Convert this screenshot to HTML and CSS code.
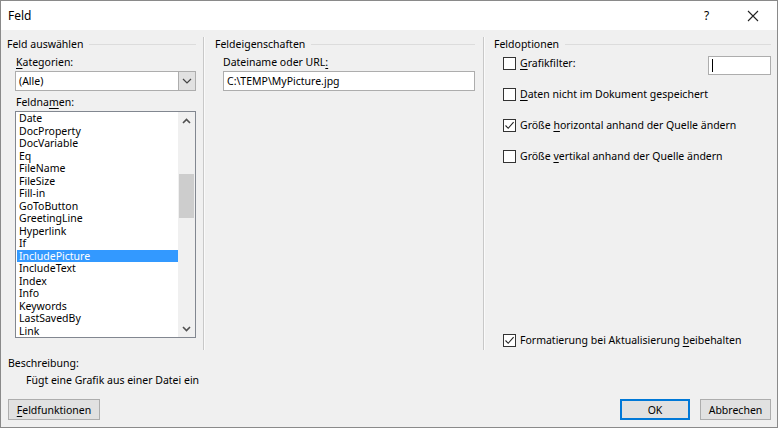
FILE: index.html
```html
<!DOCTYPE html>
<html lang="de">
<head>
<meta charset="utf-8">
<title>Feld</title>
<link rel="stylesheet" href="styles.css">
</head>
<body>
<div class="dialog">
  <div class="titlebar">
    <span class="title">Feld</span>
    <span class="help">?</span>
    <span class="close"><svg width="12" height="12" viewBox="0 0 12 12"><path d="M1 1L11 11M11 1L1 11" stroke="#222" stroke-width="1.1" fill="none"/></svg></span>
  </div>
  <div class="body">
    <div class="columns">
      <div class="col col-left">
        <div class="group-head"><span>Feld auswählen</span></div>
        <div class="label"><u>K</u>ategorien:</div>
        <div class="combo">
          <span class="combo-text">(Alle)</span>
          <span class="combo-btn"><svg width="10" height="6" viewBox="0 0 10 6"><path d="M1 1L5 5L9 1" stroke="#444" stroke-width="1.2" fill="none"/></svg></span>
        </div>
        <div class="label">Feldna<u>m</u>en:</div>
        <div class="listbox">
          <ul class="items">
            <li>Date</li>
            <li>DocProperty</li>
            <li>DocVariable</li>
            <li>Eq</li>
            <li>FileName</li>
            <li>FileSize</li>
            <li>Fill-in</li>
            <li>GoToButton</li>
            <li>GreetingLine</li>
            <li>Hyperlink</li>
            <li>If</li>
            <li class="sel">IncludePicture</li>
            <li>IncludeText</li>
            <li>Index</li>
            <li>Info</li>
            <li>Keywords</li>
            <li>LastSavedBy</li>
            <li>Link</li>
          </ul>
          <div class="scrollbar">
            <span class="arrow"><svg width="9" height="6" viewBox="0 0 9 6"><path d="M1 5L4.5 1.5L8 5" stroke="#505050" stroke-width="1.6" fill="none"/></svg></span>
            <div class="track"><div class="thumb"></div></div>
            <span class="arrow"><svg width="9" height="6" viewBox="0 0 9 6"><path d="M1 1L4.5 4.5L8 1" stroke="#505050" stroke-width="1.6" fill="none"/></svg></span>
          </div>
        </div>
      </div>
      <div class="col col-mid">
        <div class="group-head"><span>Feldeigenschaften</span></div>
        <div class="label">Dateiname oder URL<u>:</u></div>
        <div class="textbox">C:\TEMP\MyPicture.jpg</div>
      </div>
      <div class="col col-right">
        <div class="group-head"><span>Feldoptionen</span></div>
        <div class="opt opt-first">
          <span class="cb"></span><span class="opt-text"><u>G</u>rafikfilter:</span>
          <span class="filter-box"><span class="caret"></span></span>
        </div>
        <div class="opt"><span class="cb"></span><span class="opt-text"><u>D</u>aten nicht im Dokument gespeichert</span></div>
        <div class="opt"><span class="cb checked"><svg width="11" height="11" viewBox="0 0 11 11"><path d="M1.5 5.5L4.2 8.3L9.6 2.2" stroke="#222" stroke-width="1.1" fill="none"/></svg></span><span class="opt-text">Größe <u>h</u>orizontal anhand der Quelle ändern</span></div>
        <div class="opt"><span class="cb"></span><span class="opt-text">Größe <u>v</u>ertikal anhand der Quelle ändern</span></div>
        <div class="opt opt-last"><span class="cb checked"><svg width="11" height="11" viewBox="0 0 11 11"><path d="M1.5 5.5L4.2 8.3L9.6 2.2" stroke="#222" stroke-width="1.1" fill="none"/></svg></span><span class="opt-text">Formatierung bei Aktualisierung <u>b</u>eibehalten</span></div>
      </div>
    </div>
    <div class="desc">
      <div class="desc-label">Beschreibung:</div>
      <div class="desc-text">Fügt eine Grafik aus einer Datei ein</div>
    </div>
    <div class="buttons">
      <button class="btn btn-func"><u>F</u>eldfunktionen</button>
      <span class="spacer"></span>
      <button class="btn btn-ok">OK</button>
      <button class="btn btn-cancel">Abbrechen</button>
    </div>
  </div>
</div>
</body>
</html>
```

FILE: styles.css
```css
* { box-sizing: border-box; }
html, body { margin: 0; padding: 0; }
body {
  font-family: "Noto Sans", "Open Sans", sans-serif;
  font-size: 10.5px;
  color: #000;
  background: #f0f0f0;
}
u { text-decoration: underline; text-underline-offset: 2px; }

.dialog {
  width: 778px;
  height: 428px;
  border: 1px solid #8a8a8a;
  background: #f0f0f0;
  display: flex;
  flex-direction: column;
}
.titlebar {
  height: 29px;
  background: #fff;
  display: flex;
  align-items: center;
  padding-left: 7px;
}
.title { font-size: 12px; flex: 1; }
.help { width: 20px; font-size: 12px; margin-right: 23px; }
.close { width: 12px; margin-right: 18px; display: flex; }

.body {
  flex: 1;
  display: flex;
  flex-direction: column;
  padding: 7px 6px 7px 6px;
}
.columns {
  display: flex;
  height: 313px;
}
.col { display: flex; flex-direction: column; }
.col-left { width: 196px; padding-right: 7px; }
.col-mid {
  width: 280px;
  border-left: 1px solid #c8c8c8;
  box-shadow: inset 1px 0 0 #fafafa;
  padding-left: 11px;
  padding-right: 8px;
}
.col-right {
  flex: 1;
  border-left: 1px solid #c8c8c8;
  box-shadow: inset 1px 0 0 #fafafa;
  padding-left: 10px;
}

.group-head {
  height: 14px;
  line-height: 14px;
  display: flex;
  align-items: center;
  gap: 6px;
}
.group-head::after {
  content: "";
  flex: 1;
  height: 1px;
  background: #dcdcdc;
}
.label {
  height: 14px;
  line-height: 14px;
  margin-top: 4px;
  padding-left: 9px;
}
.col-mid .label { padding-left: 8px; }

.combo {
  margin-top: 2px;
  margin-left: 8px;
  height: 20px;
  border: 1px solid #adadad;
  background: #fff;
  display: flex;
  align-items: center;
}
.combo-text { flex: 1; padding-left: 3px; }
.combo-btn {
  width: 17px;
  height: 18px;
  background: #e1e1e1;
  border-left: 1px solid #adadad;
  display: flex;
  align-items: center;
  justify-content: center;
}

.listbox {
  margin-top: 2px;
  margin-left: 8px;
  height: 227px;
  border: 1px solid #828790;
  background: #fff;
  display: flex;
}
.items {
  list-style: none;
  margin: 0;
  padding: 0 0 0 1px;
  flex: 1;
}
.items li {
  height: 12.5px;
  line-height: 12.5px;
  padding-left: 2px;
}
.items li.sel { background: #3399ff; color: #fff; }
.scrollbar {
  width: 17px;
  background: #f0f0f0;
  display: flex;
  flex-direction: column;
}
.arrow {
  height: 17px;
  display: flex;
  align-items: center;
  justify-content: center;
}
.track { flex: 1; padding-top: 45px; display: flex; justify-content: center; }
.thumb { width: 15px; height: 44px; background: #cdcdcd; }

.textbox {
  margin-top: 2px;
  margin-left: 8px;
  height: 20px;
  border: 1px solid #adadad;
  background: #fff;
  line-height: 18px;
  padding-left: 3px;
}

.opt {
  display: flex;
  align-items: center;
  height: 14px;
  margin-top: 17px;
  padding-left: 9px;
}
.opt-first { margin-top: 5px; }
.opt-last { margin-top: auto; margin-bottom: 3px; }
.cb {
  width: 13px;
  height: 13px;
  border: 1px solid #333;
  background: #fff;
  display: flex;
  align-items: center;
  justify-content: center;
  margin-right: 4px;
  flex-shrink: 0;
}
.opt-text { flex: 1; }
.filter-box {
  width: 63px;
  height: 19px;
  align-self: flex-start;
  border: 1px solid #adadad;
  background: #fff;
  display: flex;
  align-items: center;
  padding-left: 3px;
}
.caret { width: 1px; height: 13px; background: #000; }

.desc { margin-top: 5px; }
.desc-label { height: 16px; line-height: 16px; padding-left: 1px; }
.desc-text { height: 18px; line-height: 18px; padding-left: 19px; }

.buttons {
  margin-top: auto;
  display: flex;
  gap: 10px;
}
.spacer { flex: 1; }
.btn {
  font-family: inherit;
  font-size: 10.5px;
  height: 21px;
  background: #e1e1e1;
  border: 1px solid #adadad;
  color: #000;
  padding: 0;
}
.btn-func { width: 92px; margin-left: 1px; }
.btn-ok { width: 70px; border: 1px solid #0078d7; box-shadow: inset 0 0 0 1px #0078d7; }
.btn-cancel { width: 71px; }
```
